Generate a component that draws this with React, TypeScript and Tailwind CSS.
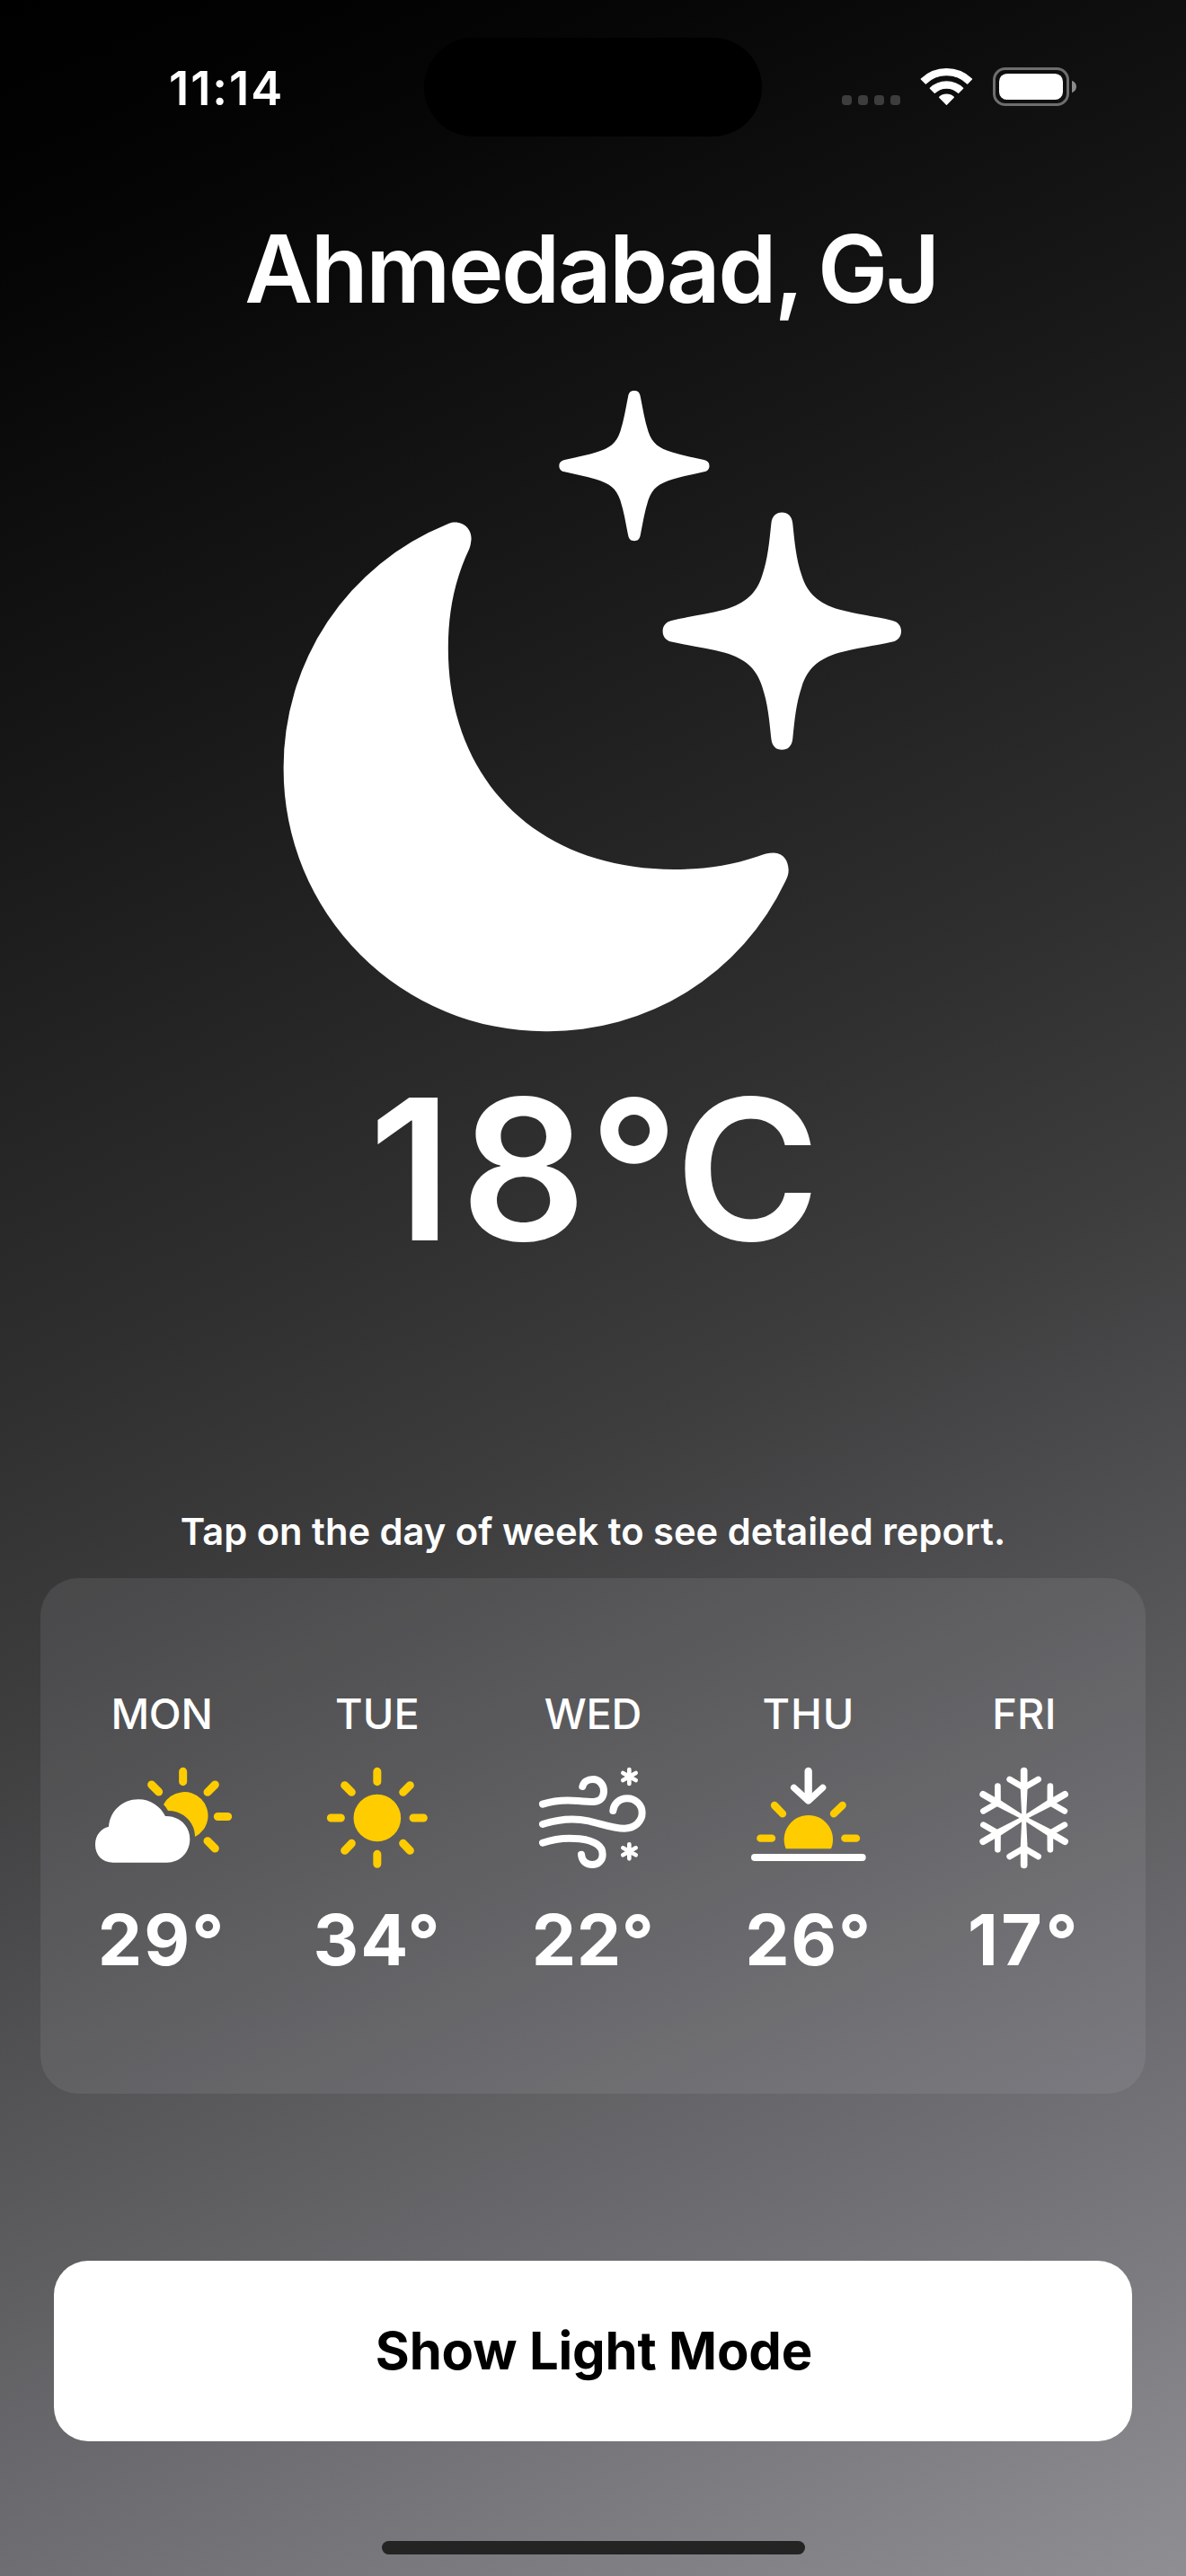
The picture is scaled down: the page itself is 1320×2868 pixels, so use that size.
import React from "react";

type Pt = [number, number];

// Builds a four-pointed star from one quadrant: a start point followed by cubic segments.
function starPath(cx: number, cy: number, q: Pt[]): string {
  const out: string[] = [];
  const put = (pts: Pt[]) => pts.slice(1).forEach(([x, y]) => out.push(`${cx + x} ${cy + y}`));
  const flip = (sx: number, sy: number, rev: boolean): Pt[] => {
    const m = q.map(([x, y]) => [x * sx, y * sy] as Pt);
    return rev ? m.reverse() : m;
  };
  put(flip(1, 1, false));
  put(flip(1, -1, true));
  put(flip(-1, -1, false));
  put(flip(-1, 1, true));
  return `M${cx + q[0][0]} ${cy + q[0][1]} C${out.join(" ")} Z`;
}

const bigStar = starPath(1242, 599, [
  [0, -280], [14, -280], [24, -272], [26, -254],
  [31, -207], [34, -172], [48, -131],
  [62, -88], [88, -66], [138, -51],
  [180, -40], [222, -35], [268, -25],
  [281, -22], [289, -13], [289, 0],
]);

const smallStar = starPath(884, 209, [
  [0, -177], [8, -177], [13, -174], [15, -163],
  [21, -134], [25, -108], [34, -81],
  [44, -52], [60, -42], [92, -32],
  [118, -24], [143, -20], [169, -14],
  [178, -12], [182, -7], [182, 0],
]);

function MoonStars() {
  return (
    <svg className="mt-4 h-[740px] w-[720px] shrink-0" viewBox="0 0 1568 1568" preserveAspectRatio="none" fill="#fff">
      <path d="M430 347C437 343 443 342 449 342C475 342 490 362 489 382C488 392 487 398 484 405C450 475 433 550 433 640C433 953 652 1161 980 1161C1055 1161 1115 1153 1185 1130C1197 1125 1209 1122 1222 1122C1246 1122 1258 1142 1258 1163C1258 1173 1255 1181 1250 1190A634 618 0 0 1 668 1543A634 618 0 0 1 34 925A634 618 0 0 1 430 347Z" />
      <path d={smallStar} />
      <path d={bigStar} />
    </svg>
  );
}

function StatusIcons() {
  return (
    <svg className="h-[90px] w-[330px]" viewBox="0 0 990 270">
      <g fill="#3d3d3d">
        <rect x="111" y="168" width="33" height="33" rx="11" />
        <rect x="165" y="168" width="33" height="33" rx="11" />
        <rect x="219" y="168" width="33" height="33" rx="11" />
        <rect x="273" y="168" width="33" height="33" rx="11" />
      </g>
      <g fill="#fff" stroke="#fff" strokeWidth="4" strokeLinejoin="round">
        <path d="M376 114A122 122 0 0 1 544.500 114L530 129A100 100 0 0 0 391 129Z" />
        <path d="M406 145A78 78 0 0 1 515 145L500 160A57 57 0 0 0 421 160Z" />
        <path d="M460.500 199L437 175A34 34 0 0 1 484 175Z" />
      </g>
      <rect x="619.500" y="79.500" width="246" height="120" rx="37" fill="none" stroke="#6e6e6e" strokeWidth="9" />
      <rect x="636" y="96" width="213" height="87" rx="26" fill="#fff" />
      <path d="M879 119C889 123 894 131 894 139.500C894 148 889 156 879 160Z" fill="#8a8a8a" />
    </svg>
  );
}

const iconClass = "mt-[25px] h-[120px] w-[160px] shrink-0";

function CloudSun() {
  return (
    <svg className={iconClass} viewBox="180 309 480 360">
      <path fill="#fff" d="M258 641C222 641 198 616 198 581C198 549 217 528 243 521C247 469 289 430 342 430C382 430 415 453 432 486C480 485 514 519 514 563C514 607 480 641 437 641Z" />
      <path fill="#ffcc00" d="M426 447A79 79 0 1 1 531 555C531 507 493 468 441 468Q436 457 426 447Z" />
      <path stroke="#ffcc00" strokeWidth="27" strokeLinecap="round" d="M491 337V371M607 487.500H641M386 381L410 405M598 381L573 406M573 569L598 594" />
    </svg>
  );
}

function Sun() {
  return (
    <svg className={iconClass} viewBox="900 309 480 360">
      <circle cx="1139.500" cy="492" r="79" fill="#ffcc00" />
      <path stroke="#ffcc00" strokeWidth="27" strokeLinecap="round" d="M1139.500 337V371M1139.500 613V646M985 492H1018M1260 492H1294M1031 383L1054 406M1249 383L1226 406M1054 577L1031 601M1226 577L1249 601" />
    </svg>
  );
}

function WindSnow() {
  return (
    <svg className={iconClass} viewBox="60 309 480 360" fill="none" stroke="#fff" strokeLinecap="round">
      <g strokeWidth="24">
        <path d="M132 446C172 433 210 431 250 435C275 437 290 438 303 438C325 437 336 422 336 403C336 380 320 363 300 363C282 363 269 372 265 387" />
        <path d="M132 513C175 499 225 489 285 502C330 512 365 527 405 527C440 527 464 503 464 475C464 447 441 427 414 427C388 427 369 445 367 468" />
        <path d="M132 575C170 562 215 557 255 562C305 568 332 586 332 614C332 634 317 648 298 648C276 648 263 636 261 614" />
      </g>
      <g strokeWidth="14">
        <path d="M421 330V378M400 342L443 366M443 342L400 366" />
        <path d="M421 580V628M400 592L443 616M443 592L400 616" />
      </g>
    </svg>
  );
}

function Sunset() {
  return (
    <svg className={iconClass} viewBox="60 309 480 360" fill="none" strokeLinecap="round" strokeLinejoin="round">
      <path stroke="#fff" strokeWidth="25" d="M299 336V425" />
      <path stroke="#fff" strokeWidth="22" d="M251 391L299 435L347 391" />
      <path fill="#ffcc00" d="M224 595A81.500 81.500 0 1 1 375 595Z" />
      <path stroke="#ffcc00" strokeWidth="25" d="M186 450L213 478M413 450L384 478M139 560H177M421 560H459" />
      <path stroke="#fff" strokeWidth="24" d="M120 624H479" />
    </svg>
  );
}

const spokes = [0, 60, 120, 180, 240, 300];

function Snowflake() {
  return (
    <svg className={iconClass} viewBox="780 309 480 360">
      {spokes.map((a) => (
        <g key={a} transform={`rotate(${a} 1019 492)`}>
          <path fill="#fff" d="M1012 492L1007 390H1031L1026 492Z" />
          <path fill="none" stroke="#fff" strokeWidth="23" strokeLinecap="round" d="M1019 334.500V390" />
          <path fill="none" stroke="#fff" strokeWidth="20" strokeLinecap="round" d="M971 363L1019 391L1067 363" />
        </g>
      ))}
    </svg>
  );
}

const days = [
  { day: "MON", temp: "29°", Icon: CloudSun, dayTracking: "tracking-[-0.006em]", tempTracking: "tracking-[0.025em]" },
  { day: "TUE", temp: "34°", Icon: Sun, dayTracking: "tracking-[0.005em]", tempTracking: "tracking-[0.025em]" },
  { day: "WED", temp: "22°", Icon: WindSnow, dayTracking: "tracking-[-0.004em]", tempTracking: "tracking-[0.007em]" },
  { day: "THU", temp: "26°", Icon: Sunset, dayTracking: "tracking-[0.020em]", tempTracking: "tracking-[0.021em]" },
  { day: "FRI", temp: "17°", Icon: Snowflake, dayTracking: "tracking-[0.006em]", tempTracking: "tracking-[0.045em]" },
];

export default function App() {
  return (
    <div className="flex h-[2868px] w-[1320px] flex-col items-center overflow-hidden bg-[linear-gradient(155.286deg,#000000_0%,#020202_5%,#060606_10%,#0d0d0d_16%,#171718_25%,#232324_35%,#2f2f30_45%,#3d3d3e_55%,#4f4f51_65%,#616164_75%,#737277_85%,#8e8e93_100%)] font-['Inter',sans-serif] text-white">
      <header className="flex h-[194px] w-full shrink-0 items-center">
        <div className="w-[472px] pl-[188px] pt-0.5 text-[52.6px] leading-[60px] font-semibold tracking-[0.037em]">11:14</div>
        <div className="h-[110px] w-[376px] rounded-full bg-black" />
        <div className="-mt-1 pl-[52px]">
          <StatusIcons />
        </div>
      </header>

      <h1 className="shrink-0 pr-1 text-[104.5px] leading-[210px] font-semibold tracking-[-0.0245em] whitespace-nowrap [word-spacing:-0.041em]">Ahmedabad, GJ</h1>
      <MoonStars />
      <div className="shrink-0 pl-2 text-[218.7px] leading-[283px] font-semibold tracking-[4.8px] whitespace-nowrap">
        <span className="tracking-[9.8px]">1</span>
        <span className="tracking-[2.8px]">8</span>
        <span className="tracking-[-4.2px]">°</span>C
      </div>

      <p className="mt-[210px] shrink-0 text-[41.7px] leading-[104px] font-semibold whitespace-nowrap">
        Tap on the day of week to see detailed report.
      </p>

      <section className="flex h-[574px] w-[1230px] shrink-0 justify-center rounded-[42px] bg-[#c8c8cc]/12 pt-[121px]">
        {days.map(({ day, temp, Icon, dayTracking, tempTracking }) => (
          <div key={day} className="flex w-[240px] flex-col items-center">
            <div className={`text-[46.8px] leading-[60px] font-medium ${dayTracking}`}>{day}</div>
            <Icon />
            <div className={`mt-[30px] text-[78.5px] leading-[93px] font-bold ${tempTracking}`}>{temp}</div>
          </div>
        ))}
      </section>

      <button className="mt-[186px] h-[201px] w-[1200px] shrink-0 rounded-[38px] bg-white pl-0.5 text-[58px] font-bold tracking-[-0.003em] text-black">
        Show Light Mode
      </button>

      <div className="mt-[111px] h-[15px] w-[471px] shrink-0 rounded-full bg-[#242424]" />
    </div>
  );
}
